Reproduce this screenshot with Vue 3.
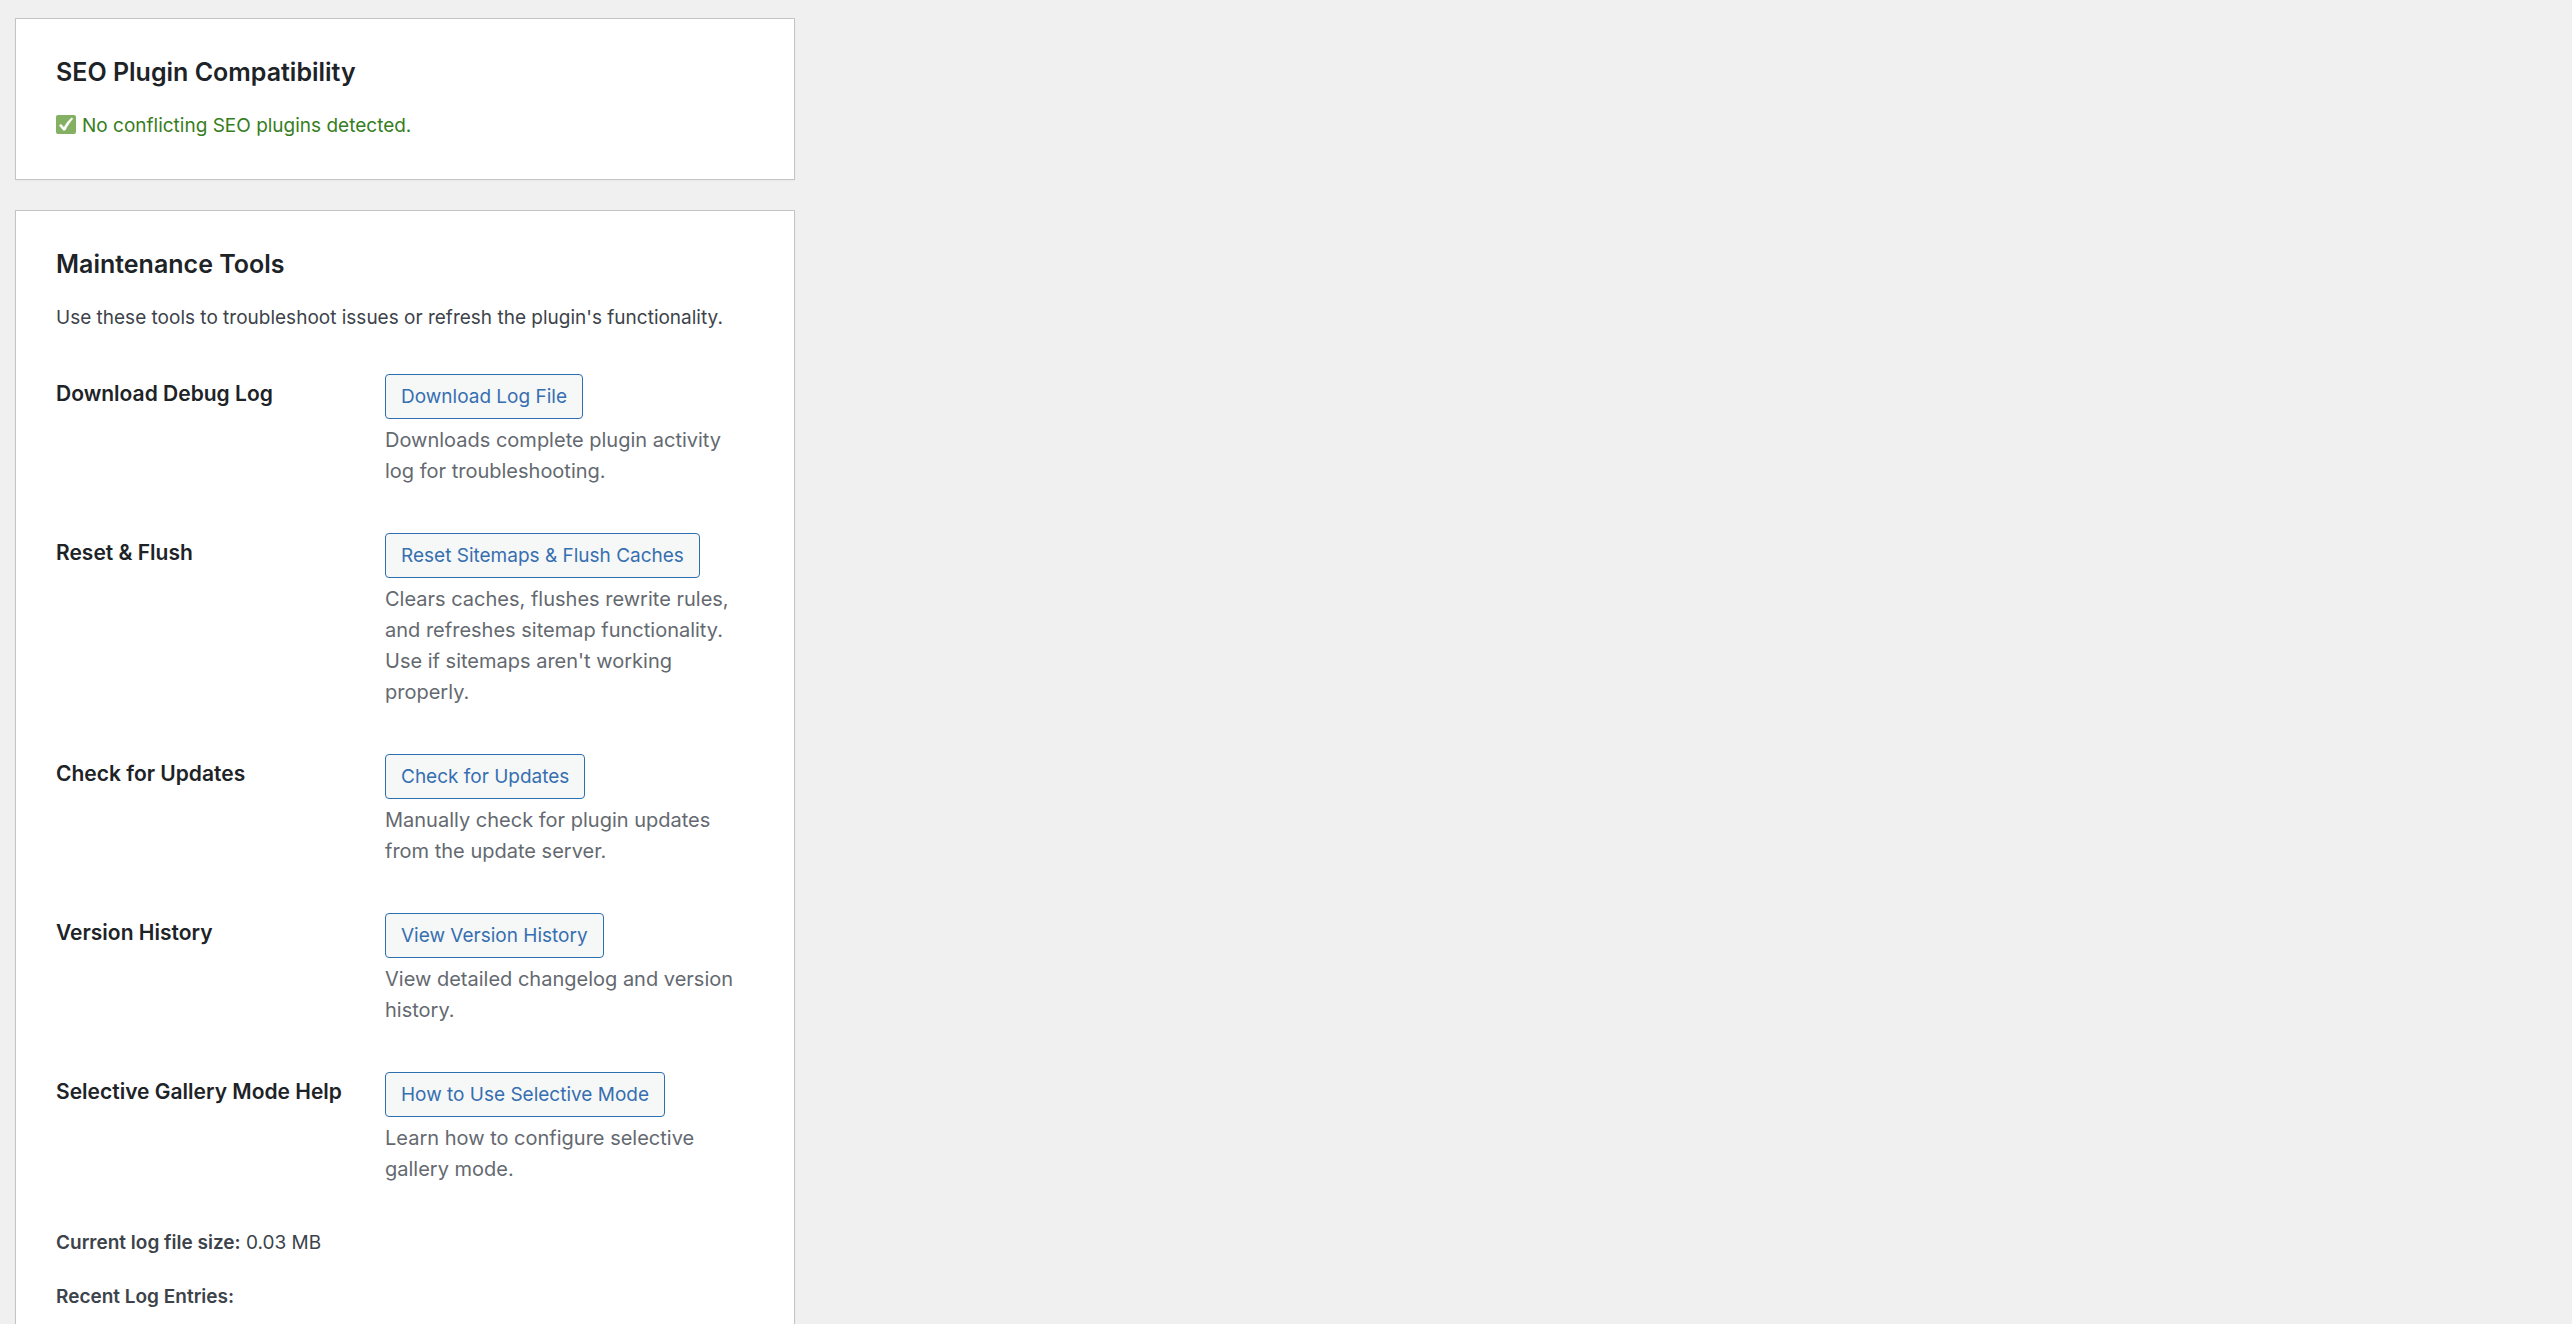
<script setup>
const tools = [
  {
    title: 'Download Debug Log',
    action: 'Download Log File',
    description: 'Downloads complete plugin activity log for troubleshooting.',
  },
  {
    title: 'Reset & Flush',
    action: 'Reset Sitemaps & Flush Caches',
    description:
      "Clears caches, flushes rewrite rules, and refreshes sitemap functionality. Use if sitemaps aren't working properly.",
  },
  {
    title: 'Check for Updates',
    action: 'Check for Updates',
    description: 'Manually check for plugin updates from the update server.',
  },
  {
    title: 'Version History',
    action: 'View Version History',
    description: 'View detailed changelog and version history.',
  },
  {
    title: 'Selective Gallery Mode Help',
    action: 'How to Use Selective Mode',
    description: 'Learn how to configure selective gallery mode.',
  },
]
</script>

<template>
  <main class="page">
    <section class="card">
      <h2>SEO Plugin Compatibility</h2>
      <p class="status">
        <svg class="check" viewBox="0 0 20 19" aria-hidden="true">
          <rect width="20" height="19" rx="2" fill="#84b063" />
          <path d="M3.2 10.4 5 9.2 8 12.4C9.8 9 12 6 15.4 3L17 3.6C14 7 11.400 10.800 9.400 15L7.600 15.600Z" fill="#fff" stroke="#fff" stroke-width="0.4" stroke-linejoin="round" />
        </svg>
        <span>No conflicting SEO plugins detected.</span>
      </p>
    </section>

    <section class="card">
      <h2>Maintenance Tools</h2>
      <p>Use these tools to troubleshoot issues or refresh the plugin's functionality.</p>

      <table class="tools">
        <tbody>
          <tr v-for="tool in tools" :key="tool.title">
            <th scope="row">{{ tool.title }}</th>
            <td>
              <button type="button">{{ tool.action }}</button>
              <p class="description">{{ tool.description }}</p>
            </td>
          </tr>
        </tbody>
      </table>

      <p><strong>Current log file size:</strong> 0.03 MB</p>
      <p class="entries"><strong>Recent Log Entries:</strong></p>
    </section>
  </main>
</template>

<style>
body {
  background: #f0f0f0;
}
</style>

<style scoped>
.page {
  display: flex;
  flex-direction: column;
  gap: 30px;
  height: 100vh;
  overflow: hidden;
  box-sizing: border-box;
  padding: 18px 15px 0;
  font: 19px/30px Inter, "Liberation Sans", sans-serif;
  color: #3c434a;
}
.card {
  flex: none;
  box-sizing: border-box;
  width: 100%;
  max-width: 780px;
  padding: 35px 40px 38px;
  background: #fff;
  border: 1px solid #c3c4c7;
  box-shadow: 0 1px 2px rgba(0, 0, 0, 0.04);
}
h2 {
  margin: 0 0 21px;
  font-size: 25px;
  line-height: 36px;
  font-weight: 600;
  color: #1d2327;
}
p {
  margin: 0;
}
strong {
  font-weight: 600;
}
.status {
  display: flex;
  align-items: flex-start;
  gap: 6px;
  color: #377d22;
}
.check {
  width: 20px;
  height: 19px;
  margin-top: 4px;
}
.tools {
  width: 100%;
  margin: 18px 0 20px;
  border-collapse: collapse;
}
th {
  width: 314px;
  padding: 28px 15px 23px 0;
  font-size: 21px;
  font-weight: 600;
  text-align: left;
  vertical-align: top;
  color: #1d2327;
}
td {
  padding: 23px 0;
  vertical-align: top;
}
button {
  display: block;
  height: 45px;
  margin: 0 0 6px;
  padding: 0 15px;
  border: 1px solid #2e6fb0;
  border-radius: 4px;
  background: #f6f7f7;
  color: #366fb0;
  font: inherit;
  line-height: 42px;
}
.description {
  font-size: 20px;
  line-height: 31px;
  color: #646970;
}
.entries {
  margin-top: 24px;
}
</style>
